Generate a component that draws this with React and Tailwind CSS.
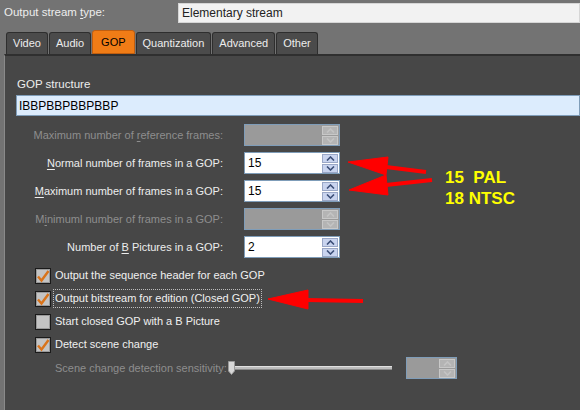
const tabs = ["Video", "Audio", "GOP", "Quantization", "Advanced", "Other"];

function Chevron({ up, color }) {
  return (
    <svg width="9" height="5" viewBox="0 0 9 5">
      <path
        d={up ? "M1 4.5 L4.5 1 L8 4.5" : "M1 0.5 L4.5 4 L8 0.5"}
        fill="none"
        stroke={color}
        strokeWidth="1.6"
      />
    </svg>
  );
}

function Spinner({ value, disabled, width = "w-[96px]" }) {
  const btn = disabled
    ? "bg-[#b4b4b4] border-[#c8c8c8]"
    : "bg-[#c9d4ef] border-[#9aa7c6]";
  const chev = disabled ? "#c4c4c4" : "#3c4f78";
  return (
    <div
      className={`${width} h-[22px] flex items-center border border-[#7f9db9] ${
        disabled ? "bg-[#9a9a9a]" : "bg-white"
      }`}
    >
      <span className="flex-1 pl-[3px] text-black text-[12px]">{value}</span>
      <div className="flex flex-col gap-[1px] mr-[1px]">
        <div className={`w-[16px] h-[9px] border ${btn} flex items-center justify-center`}>
          <Chevron up color={chev} />
        </div>
        <div className={`w-[16px] h-[9px] border ${btn} flex items-center justify-center`}>
          <Chevron color={chev} />
        </div>
      </div>
    </div>
  );
}

function Row({ label, value, disabled }) {
  return (
    <div className="flex items-center h-[28px]">
      <div
        className={`w-[207px] text-right ${
          disabled ? "text-[#8e8e8e]" : "text-[#ededed]"
        }`}
      >
        {label}
      </div>
      <div className="ml-[21px]">
        <Spinner value={value} disabled={disabled} />
      </div>
    </div>
  );
}

function Check({ checked, label, focus }) {
  return (
    <div className="flex items-center h-[23px] pl-[19px]">
      <div className="w-[16px] h-[16px] border border-[#1a1a1a] bg-[#c4c4c4] shadow-[inset_0_0_0_1px_#9a9a9a] flex items-center justify-center">
        {checked && (
          <svg width="14" height="14" viewBox="0 0 14 14">
            <path
              d="M2 7.5 L5.5 11.5 L12.5 2"
              fill="none"
              stroke="#d9731a"
              strokeWidth="2.4"
            />
          </svg>
        )}
      </div>
      <span
        className={`ml-[2px] px-[1px] text-[#f0f0f0] ${
          focus ? "border border-dotted border-[#bdbdbd]" : "border border-transparent"
        }`}
      >
        {label}
      </span>
    </div>
  );
}

function U({ children }) {
  return <span className="underline underline-offset-2">{children}</span>;
}

export default function App() {
  return (
    <div
      className="w-[580px] h-[410px] bg-[#737373] relative overflow-hidden flex flex-col text-[11px] text-[#ededed]"
      style={{ fontFamily: "'Liberation Sans', Arial, sans-serif" }}
    >
      <div className="flex items-center pt-[3px] h-[23px] text-[11.5px]">
        <div className="w-[178px] pl-[4px]">
          Output stream <U>t</U>ype:
        </div>
        <div className="flex-1 h-[20px] bg-[#f2f2f2] border border-[#d6d6d6] flex items-center pl-[3px] text-[#222] text-[12px]">
          Elementary stream
        </div>
      </div>

      <div className="flex items-end h-[24px] mt-[7px] pl-[6px] text-[11px]">
        {tabs.map((t) =>
          t === "GOP" ? (
            <div
              key={t}
              className="h-[24px] px-[8px] bg-[#f07c16] border border-[#c05e10] rounded-t-[3px] text-black flex items-center mr-[1px]"
            >
              {t}
            </div>
          ) : (
            <div
              key={t}
              className="h-[22px] px-[6px] bg-[#4b4b4b] border border-[#2e2e2e] border-b-0 rounded-t-[3px] flex items-center mr-[1px]"
            >
              {t}
            </div>
          )
        )}
      </div>

      <div className="flex-1 ml-[4px] bg-[#474747] border-t-2 border-l border-t-[#2f2f2f] border-l-[#8a8a8a] pt-[20px] pl-[11px]">
        <div className="pl-[1px] h-[15px] text-[11.5px]">GOP structure</div>
        <div className="h-[21px] mt-[4px] bg-[#dcecfd] border border-[#7f9db9] flex items-center pl-[2px] text-black text-[12px]">
          IBBPBBPBBPBBP
        </div>

        <div className="mt-[5px]">
          <Row
            label={<>Maximum number of <U>r</U>eference frames:</>}
            disabled
          />
          <Row
            label={<><U>N</U>ormal number of frames in a GOP:</>}
            value="15"
          />
          <Row
            label={<><U>M</U>aximum number of frames in a GOP:</>}
            value="15"
          />
          <Row
            label={<>M<U>i</U>nimuml number of frames in a GOP:</>}
            disabled
          />
          <Row
            label={<>Number of <U>B</U> Pictures in a GOP:</>}
            value="2"
          />
        </div>

        <div className="mt-[3px]">
          <Check checked label="Output the sequence header for each GOP" />
          <Check checked focus label="Output bitstream for edition (Closed GOP)" />
          <Check label="Start closed GOP with a B Picture" />
          <Check checked label="Detect scene change" />
        </div>

        <div className="flex items-center h-[24px] pl-[39px]">
          <span className="w-[173px] text-[#8e8e8e]">Scene change detection sensitivity:</span>
          <div className="flex items-center">
            <svg width="7" height="14" viewBox="0 0 7 14">
              <path d="M0.5 0.5 H6.5 V10 L3.5 13.5 L0.5 10 Z" fill="#d8d8d8" stroke="#9a9a9a" />
            </svg>
            <div className="w-[157px] h-[4px] bg-[#bdbdbd] border-t border-[#e0e0e0] border-b border-b-[#8a8a8a]" />
          </div>
          <div className="ml-[14px]">
            <Spinner disabled width="w-[51px]" />
          </div>
        </div>
      </div>

      <svg className="absolute left-0 top-0 pointer-events-none" width="580" height="410">
        <g fill="#ff0000" stroke="#ff0000">
          <line x1="386" y1="167" x2="426" y2="172" strokeWidth="4" />
          <polygon points="348,162 388,157 386,175" strokeWidth="1" />
          <line x1="386" y1="185" x2="432" y2="180" strokeWidth="4" />
          <polygon points="349,190 386,175 388,195" strokeWidth="1" />
          <line x1="306" y1="300" x2="363" y2="301" strokeWidth="4" />
          <polygon points="268,299 308,290 308,309" strokeWidth="1" />
        </g>
      </svg>
      <div
        className="absolute left-[445px] top-[167px] text-[#ffff00] font-bold text-[17px] leading-[21px] whitespace-pre"
        style={{ fontFamily: "'Liberation Sans', Arial, sans-serif" }}
      >
        {"15  PAL\n18 NTSC"}
      </div>
    </div>
  );
}
